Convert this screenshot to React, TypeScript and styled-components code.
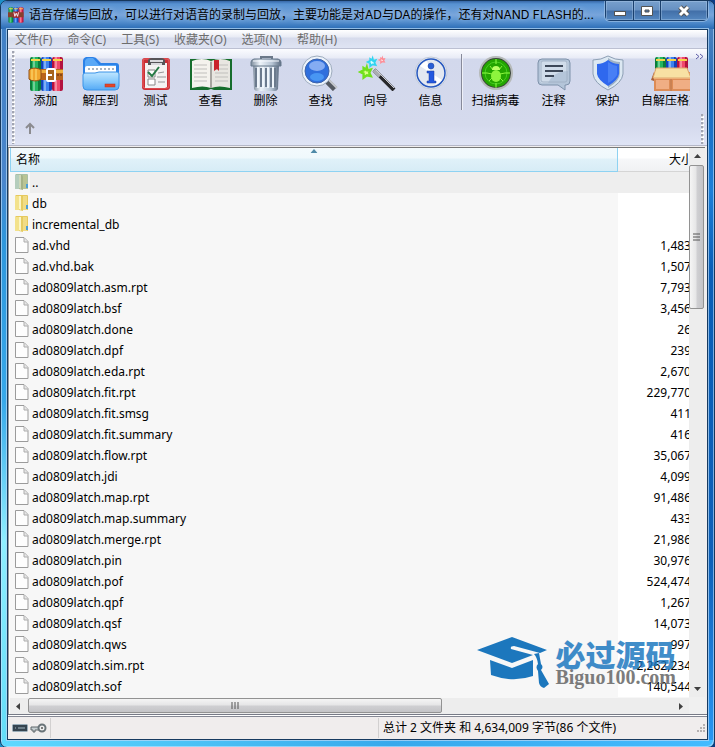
import React from "react";
import styled, { createGlobalStyle, css } from "styled-components";

const Global = createGlobalStyle`
  * { box-sizing: border-box; }
  body {
    margin: 0;
    font-family: "Noto Sans", "Noto Sans CJK SC", sans-serif;
    font-size: 12px;
    color: #000;
  }
  button { font: inherit; color: inherit; border: 0; padding: 0; background: none; }
`;

const Desktop = styled.div`
  min-height: 100vh;
  background: linear-gradient(90deg, #1c8ec8, #0a3c86);
`;

const Frame = styled.div`
  min-height: 100vh;
  display: flex;
  flex-direction: column;
  padding: 0 6px 7px;
  overflow: hidden;
  border: 1px solid #16375c;
  border-radius: 7px;
  background:
    linear-gradient(90deg, #5ed9ff, #37a9ec 55%, #43bbff) bottom / 100% 7px no-repeat,
    linear-gradient(180deg, #3f7fc4 0, #4a86cc 180px, #2f97dc 240px, #38a9ea 400px, #8eeeff 540px, #62dcf8) left / 50% 100% no-repeat,
    linear-gradient(180deg, #3a73b5 0, #4a80bd 30px, #1a6cc0 100px, #1d7fd8 190px, #0a5eb6 270px, #0e60b8 560px, #2a98f4) right / 50% 100% no-repeat;
  box-shadow: inset 1px 1px 0 rgba(200, 228, 255, 0.6), inset -1px -1px 0 rgba(200, 228, 255, 0.6);
`;

const TitleBar = styled.header`
  height: 28px;
  display: flex;
  align-items: flex-start;
  margin: 0 -6px;
  padding: 0 6px 0 7px;
  background: linear-gradient(180deg, #3768a8 0, #5792d2 3px, #78a5db 14px, #5791d0 20px, #2f70b8 27px);
`;

const TitleIcon = styled.svg`
  flex: none;
  width: 16px;
  height: 16px;
  margin-top: 6px;
`;

const Title = styled.h1`
  flex: 1;
  min-width: 0;
  margin: 5px 0 0 5px;
  overflow: hidden;
  white-space: nowrap;
  font-family: Inter, "Noto Sans CJK SC", sans-serif;
  font-size: 12px;
  font-weight: 400;
  line-height: 18px;
  text-shadow: 0 0 6px rgba(255, 255, 255, 0.45);
`;

const WindowButtons = styled.div`
  display: flex;
  flex: none;
  height: 20px;
  border: 1px solid #1a406e;
  border-top: 0;
  border-radius: 0 0 5px 5px;
  box-shadow: 0 0 0 1px rgba(190, 215, 240, 0.45);
`;

const WindowButton = styled.button<{ $wide?: boolean }>`
  width: ${(p) => (p.$wide ? 47 : 27)}px;
  display: flex;
  align-items: center;
  justify-content: center;
  background: linear-gradient(180deg, #78a0cd 0, #6690c2 9px, #426fa8 10px, #5487c0 100%);
  box-shadow: inset 0 0 0 1px rgba(190, 215, 240, 0.35);
  & + & { border-left: 1px solid #1a406e; }
`;

const Client = styled.div`
  flex: 1;
  display: flex;
  flex-direction: column;
  border: 1px solid #163a60;
  background: #f0eeee;
  box-shadow: 0 0 0 1px rgba(180, 215, 245, 0.75);
`;

const MenuBar = styled.nav`
  height: 19px;
  display: flex;
  gap: 15px;
  padding-left: 7px;
  background: linear-gradient(180deg, #fff 0, #e8ebf5 7px, #d6dbec 8px, #dfe4f3 100%);
  border-bottom: 1px solid #bcc0d2;
  color: #6d6d6d;
`;

const MenuItem = styled.button`
  line-height: 20px;
  white-space: nowrap;
`;

const ToolArea = styled.section`
  height: 97px;
  display: flex;
  padding: 2px 3px 0 4px;
  border-bottom: 1px solid #b5b8c8;
  background: linear-gradient(180deg, #fbfcff 0, #e8ebf6 9px, #d2d8ec 10px, #d5daed 76px, #dfe4f5 100%);
`;

const dots = css`
  width: 3px;
  background: radial-gradient(circle at 1px 1px, #a0a4b2 1px, #fff 2px) 0 0 / 3px 4px;
`;

const Gripper = styled.div`
  ${dots}
  flex: none;
  margin: 0 3px 1px 0;
`;

const ToolRows = styled.div`
  flex: 1;
  min-width: 0;
`;

const ToolRow = styled.div`
  display: flex;
  height: 64px;
  overflow: hidden;
`;

const ToolButton = styled.button<{ $width?: number }>`
  flex: none;
  width: ${(p) => p.$width ?? 55}px;
  display: flex;
  flex-direction: column;
  align-items: center;
  padding-top: 4px;
  line-height: 20px;
  white-space: nowrap;
`;

const ToolIcon = styled.svg`
  width: 44px;
  height: 36px;
  flex: none;
`;

const ToolDivider = styled.div`
  flex: none;
  width: 2px;
  height: 56px;
  margin: 3px 0 0 3px;
  background: #878a9a;
  border-right: 1px solid #eef0f8;
`;

const UpButton = styled.button`
  display: flex;
  margin: 7px 0 0 6px;
`;

const ToolEnd = styled.div`
  flex: none;
  width: 14px;
  display: flex;
  flex-direction: column;
  align-items: flex-end;
  justify-content: space-between;
  padding: 2px 0 1px;
`;

const EndGrip = styled.div`
  ${dots}
  height: 30px;
`;

const ListPane = styled.main`
  position: relative;
  flex: 1;
  display: grid;
  grid-template-columns: minmax(0, 1fr) 16px;
  grid-template-rows: 1fr 17px;
  margin: 1px 2px 0 0;
  padding-left: 1px;
  border-top: 1px solid #777;
  border-left: 1px solid #999;
  background: #fff;
`;

const Viewport = styled.div`
  overflow: hidden;
`;

const FileTable = styled.table`
  width: calc(100% + 10px);
  table-layout: fixed;
  border-collapse: separate;
  border-spacing: 0;
`;

const NameCol = styled.col``;
const SizeCol = styled.col`
  width: 81px;
`;

const HeadCell = styled.th<{ $sorted?: boolean }>`
  position: relative;
  height: 24px;
  padding: 0 5px;
  font-weight: 400;
  line-height: 22px;
  text-align: ${(p) => (p.$sorted ? "left" : "right")};
  background: ${(p) =>
    p.$sorted
      ? "linear-gradient(180deg, #f3fafd 0, #eff8fc 10px, #e0f1f9 11px, #d7ecf6 100%)"
      : "linear-gradient(180deg, #fff 0, #fff 10px, #f6f7f9 11px, #f0f1f3 100%)"};
  border-bottom: 1px solid ${(p) => (p.$sorted ? "#8ed2f2" : "#d5d5d5")};
  border-right: 1px solid ${(p) => (p.$sorted ? "#8ed2f2" : "#d5d5d5")};
  border-left: ${(p) => (p.$sorted ? "1px solid #8ed2f2" : "0")};
`;

const SortMark = styled.svg`
  position: absolute;
  top: 1px;
  left: 50%;
  transform: translateX(-50%);
`;

const Row = styled.tr<{ $current?: boolean }>`
  height: 21px;
  background: ${(p) => (p.$current ? "#eee" : "#fff")};
`;

const NameCell = styled.td<{ $current?: boolean }>`
  padding: 0;
  background: ${(p) => (p.$current ? "#eee" : "#f7f7f7")};
`;

const NameContent = styled.div`
  height: 21px;
  display: flex;
  align-items: center;
  line-height: 20px;
  font-size: 12px;
  white-space: nowrap;
`;

const IconSlot = styled.span`
  width: 20px;
  height: 21px;
  margin-right: 2px;
  padding: 2px 0 0 5px;
  background: #f7f7f7;
`;

const SizeCell = styled.td`
  padding: 0 8px 0 0;
  text-align: right;
  line-height: 20px;
`;

const VScroll = styled.div`
  display: flex;
  flex-direction: column;
  background: #ededed;
`;

const HScroll = styled.div`
  display: flex;
  background: #ededed;
  border-top: 1px solid #f7f7f7;
`;

const Corner = styled.div`
  background: #f0f0f0;
`;

const ArrowButton = styled.button`
  flex: none;
  width: 17px;
  height: 17px;
  display: flex;
  align-items: center;
  justify-content: center;
`;

const thumb = css`
  display: flex;
  align-items: center;
  justify-content: center;
  border: 1px solid #929292;
  border-radius: 2px;
`;

const VThumb = styled.div`
  ${thumb}
  height: 144px;
  margin-right: 1px;
  background: linear-gradient(90deg, #f5f5f5, #e6e6e7 45%, #cfcfd2 55%, #c4c4c7);
`;

const HThumb = styled.div`
  ${thumb}
  width: 61%;
  height: 15px;
  margin-left: 1px;
  background: linear-gradient(180deg, #f5f5f5, #e6e6e7 45%, #cfcfd2 55%, #c4c4c7);
`;

const Spacer = styled.div`
  flex: 1;
`;

const StatusBar = styled.footer`
  height: 25px;
  display: flex;
  padding: 3px 1px 1px 3px;
  border-top: 1px solid #777a86;
  background: linear-gradient(180deg, #fff 0, #fff 1px, #858894 1px, #858894 2px, #f0eded 2px);
`;

const StatusCell = styled.div<{ $icons?: boolean }>`
  flex: ${(p) => (p.$icons ? "0 0 39px" : "1 1 0")};
  display: flex;
  align-items: center;
  gap: 2px;
  padding-left: ${(p) => (p.$icons ? 1 : 4)}px;
  line-height: 18px;
  white-space: nowrap;
  border-left: ${(p) => (p.$icons ? "0" : "1px solid #d2d0d0")};
`;

const Watermark = styled.div`
  position: absolute;
  right: 29px;
  bottom: 26px;
  display: flex;
  align-items: center;
  gap: 6px;
  opacity: 0.9;
  pointer-events: none;
`;

const WatermarkText = styled.div`
  display: flex;
  flex-direction: column;
`;

const WatermarkName = styled.span`
  font: 900 30px/28px "Noto Sans CJK SC", sans-serif;
  color: #1674be;
  opacity: 0.9;
`;

const WatermarkSite = styled.span`
  font: 700 20px/20px "Liberation Serif", serif;
  color: #6e6e6e;
`;

const Books = () => (
  <g>
    {[
      ["#0b7d3b", "#23b45f", 6],
      ["#1741b8", "#3c82ee", 17],
      ["#b3123f", "#f0486b", 28],
    ].map(([dark, light, x]) => (
      <g key={x as number} transform={`translate(${x} 2)`}>
        <rect width="11" height="34" rx="2" fill={dark as string} />
        <rect x="2" width="6" height="34" fill={light as string} />
        <rect x="3" width="2" height="34" fill="#fff" opacity=".35" />
        <rect x="1" y="2" width="9" height="2" fill="#f7d54a" />
      </g>
    ))}
  </g>
);

const AddIcon = () => (
  <ToolIcon viewBox="0 0 44 36">
    <Books />
    <path d="M5 14h34v11H5z" fill="#b9651b" />
    <path d="M5 15h34v3H5z" fill="#eeb03f" />
    <path d="M5 15c4-3 9-2 12 0v9c-4 3-9 2-12 0z" fill="#f0a52f" stroke="#91501a" />
    <path d="M8 14v11M12 14v11" stroke="#ffe27c" />
    <rect x="23" y="14" width="8" height="12" rx="1" fill="#a6651c" stroke="#fff" strokeWidth="2" />
    <path d="M22 20h6" stroke="#fff" strokeWidth="2" />
    <path d="M34 19v2M37 19v2" stroke="#592f0e" />
  </ToolIcon>
);

const ExtractIcon = () => (
  <ToolIcon viewBox="0 0 44 36">
    <defs>
      <linearGradient id="fold" x1="0" y1="0" x2="0" y2="1">
        <stop stopColor="#c0e6ff" />
        <stop offset=".5" stopColor="#8acbfc" />
        <stop offset="1" stopColor="#55aaf5" />
      </linearGradient>
    </defs>
    <path d="M4 6q0-3 3-4h7q3 0 5 3l3 3h15q3 0 3 3v20H4z" fill="#2c82e8" />
    <path d="M6 6q1-3 4-3h4l6 7h17v3H6z" fill="#59a8f6" />
    <path d="M6 13q0-2 2-2h29v10H6z" fill="#fff" />
    <path d="M9 14h27" stroke="#a9b4c0" strokeDasharray="2 2" strokeWidth="2" />
    <path d="M4 20q0-2 2-2h10l4-1h18q2 0 2 2v12q0 4-4 4H8q-4 0-4-4z" fill="url(#fold)" stroke="#3b93e8" />
    <rect x="26" y="29" width="10" height="3" fill="#e34527" stroke="#b93325" strokeWidth=".5" />
  </ToolIcon>
);

const TestIcon = () => (
  <ToolIcon viewBox="0 0 44 36">
    <rect x="8" y="3" width="28" height="32" rx="3" fill="#c92f36" />
    <rect x="9" y="4" width="26" height="29" rx="2" fill="none" stroke="#ed6264" />
    <path d="M11 8h22v24l-2 1H11z" fill="#f4f2f2" />
    <path d="M14 6q0-3 4-3h9q4 0 4 3v4H14z" fill="#565458" />
    <path d="M16 6h13M17 9h11" stroke="#d9d9dd" strokeWidth="2" />
    <path d="M14 15h7v7h-7zM14 24h7v6h-7z" fill="#fff" stroke="#888" />
    <path d="M14 17l4 4 7-9" fill="none" stroke="#267a45" strokeWidth="2" />
    <path d="M24 18l6-1M23 22h9M24 27h7" stroke="#96979a" />
  </ToolIcon>
);

const ViewIcon = () => (
  <ToolIcon viewBox="0 0 44 36">
    <path d="M1 4h42v31H25l-3-1-3 1H1z" fill="#166d2c" />
    <path d="M3 6q10-4 19 0v27q-8-3-19 0z" fill="#f4f2ed" />
    <path d="M22 6q9-4 19 0v27q-11-3-19 0z" fill="#e8e6e1" />
    <path d="M21 6q1 2 2 0v27h-2z" fill="#a6a49f" />
    {[10, 14, 18, 22, 26].map((y) => (
      <path key={y} d={`M5 ${y}h13M26 ${y}h13`} stroke="#c0bfbc" />
    ))}
    <path d="M25 5h5v11l-2-2-3 2z" fill="#c9222c" />
  </ToolIcon>
);

const DeleteIcon = () => (
  <ToolIcon viewBox="0 0 44 36">
    <defs>
      <linearGradient id="metal">
        <stop stopColor="#7d8c9c" />
        <stop offset=".3" stopColor="#edf3f9" />
        <stop offset=".7" stopColor="#b7c5d5" />
        <stop offset="1" stopColor="#5d6d82" />
      </linearGradient>
    </defs>
    <path d="M17 5V2h11v3" fill="none" stroke="#6b7889" strokeWidth="2" />
    <path d="M9 9h26l-1 25q-1 2-3 2H13q-2 0-3-2z" fill="url(#metal)" />
    {[12, 17, 22, 27, 31].map((x) => (
      <path key={x} d={`M${x} 13v19`} stroke="#6b7a8d" strokeWidth="2" />
    ))}
    {[14, 19, 24, 29].map((x) => (
      <path key={x} d={`M${x} 12v21`} stroke="#eff5fb" strokeWidth="2" />
    ))}
    <path d="M7 7q0-2 3-3h24q3 1 3 3v4H7z" fill="url(#metal)" stroke="#697a8d" />
    <path d="M9 6h26" stroke="#f7faff" />
  </ToolIcon>
);

const FindIcon = () => (
  <ToolIcon viewBox="0 0 44 36">
    <path d="M28 26l8 8" stroke="#555a62" strokeWidth="6" />
    <path d="M30 25l8 8" stroke="#c6c9ce" strokeWidth="2" />
    <circle cx="18" cy="16" r="15" fill="#edf3fb" stroke="#9eacbd" />
    <circle cx="18" cy="16" r="12" fill="#2f6fdd" stroke="#3e63a8" />
    <ellipse cx="18" cy="22" rx="7" ry="4" fill="#53a7fc" opacity=".7" />
    <ellipse cx="18" cy="11" rx="8" ry="5" fill="#b2cdff" opacity=".65" />
  </ToolIcon>
);

const star = "M1-6L2-2 6-3 4 1 6 5 1 4-3 7-3 2-7 0-3-2-3-5 0-3z";

const WizardIcon = () => (
  <ToolIcon viewBox="0 0 44 36">
    <path d="M20 15l20 20" stroke="#292a2d" strokeWidth="4" />
    <path d="M20 15l6 6" stroke="#aaadb1" strokeWidth="4" />
    <path d="M22 15l18 18" stroke="#cfd0d3" strokeWidth="1" />
    <path d={star} transform="translate(12 17) scale(.8)" fill="#dcff84" stroke="#71e01d" strokeWidth="3" />
    <path d={star} transform="translate(18 7) scale(.6)" fill="#d7fcff" stroke="#30d5f1" strokeWidth="3" />
    <path d={star} transform="translate(28 5) scale(.4)" fill="#ffdadd" stroke="#ff8b94" strokeWidth="3" />
  </ToolIcon>
);

const InfoIcon = () => (
  <ToolIcon viewBox="0 0 44 36">
    <circle cx="22" cy="18" r="16" fill="#edf1f7" stroke="#c0c8d6" />
    <circle cx="22" cy="18" r="14" fill="#e3e8f1" stroke="#2657be" strokeWidth="1.500" />
    <path d="M22 18L11 11a14 14 0 0 1 7-5zM22 18l11 7a14 14 0 0 1-7 5z" fill="#fff" />
    <circle cx="22" cy="11" r="3" fill="#285fd5" stroke="#1c3f9a" strokeWidth=".5" />
    <path d="M18 16h7v10h2v2h-9v-2h2v-8h-2z" fill="#2358e0" stroke="#1c3f9a" strokeWidth=".5" />
  </ToolIcon>
);

const VirusIcon = () => (
  <ToolIcon viewBox="0 0 44 36">
    <circle cx="22" cy="18" r="16" fill="#394439" stroke="#b6bab9" strokeWidth="2" />
    <circle cx="22" cy="18" r="14" fill="#23a500" />
    <circle cx="22" cy="18" r="11" fill="none" stroke="#48cc22" />
    <path d="M22 4v5M22 28v5M8 18h5M31 18h5" stroke="#91ff45" />
    <path d="M16 11l3 4M28 11l-3 4M13 18l5 1M31 18l-5 1M15 26l3-3M29 26l-3-3" stroke="#8df43d" />
    <ellipse cx="22" cy="21" rx="5" ry="6" fill="#8df43d" />
    <path d="M18 15q0-4 4-4t4 4z" fill="#baff65" />
  </ToolIcon>
);

const CommentIcon = () => (
  <ToolIcon viewBox="0 0 44 36">
    <path d="M10 4h24q4 0 4 4v18q0 4-4 4h-1v5l-7-5H10q-4 0-4-4V8q0-4 4-4z" fill="#b4c5d9" stroke="#7f92aa" />
    <path d="M11 6h22q3 0 3 3v7q-14 0-20 12h-5q-3 0-3-3V9q0-3 3-3z" fill="#d0dcea" />
    <rect x="9" y="6" width="26" height="21" rx="2" fill="none" stroke="#a2b2c6" />
    <path d="M13 11h18M13 16h18M13 21h9" stroke="#3d4859" strokeWidth="2" />
  </ToolIcon>
);

const ProtectIcon = () => (
  <ToolIcon viewBox="0 0 44 36">
    <path d="M22 1q7 4 15 4v14q-1 9-15 16Q8 28 7 19V5q8 0 15-4z" fill="#dce8f2" stroke="#8d9fb4" />
    <path d="M22 3q6 4 12 4v11q0 8-12 15z" fill="#9fb2c6" />
    <path d="M22 5q5 4 11 4v10q-1 6-11 12-10-6-11-12V9q6 0 11-4z" fill="#2f68ee" />
    <path d="M22 7q4 3 9 4v9q-3 5-9 8z" fill="#487ff5" />
  </ToolIcon>
);

const SfxIcon = () => (
  <ToolIcon viewBox="0 0 44 36">
    <Books />
    <path d="M5 17h37v19H5z" fill="#dd8c56" />
    <path d="M5 17L2 25l3 1z" fill="#a8613b" />
    <path d="M7 13h31l4 10H4z" fill="#f8e1a3" stroke="#dfa66c" />
    <path d="M5 23h37v1H5z" fill="#eeb078" />
    <path d="M7 25h13v9H7zM24 25h17v9H24z" fill="#f0ae84" />
    <path d="M22 24v12" stroke="#b8764c" />
  </ToolIcon>
);

const FolderIcon = ({ parent }: { parent?: boolean }) => (
  <svg width="14" height="17" viewBox="0 0 14 17" aria-hidden>
    <path d="M1 0h11q1 0 1 1v14H0V1z" fill={parent ? "#a9bfa6" : "#e6c95e"} />
    <path d="M0 1h4v14H0z" fill={parent ? "#b4cdbc" : "#f3e28c"} />
    <path d="M4 1h3l1 2v13l-4-1z" fill={parent ? "#a5b288" : "#e6cc62"} />
    <path d="M4 1h2v14l-2-1z" fill={parent ? "#cdd8ba" : "#fbf5c6"} />
    <path d="M8 1h4v14H8z" fill={parent ? "#b9c494" : "#f0dc85"} />
    <path d="M12 10v4" stroke="#4d9ed4" strokeWidth="2" />
  </svg>
);

const FileIcon = () => (
  <svg width="14" height="17" viewBox="0 0 14 17" aria-hidden>
    <path d="M1 .5h8l4 4v11H.5V.5z" fill="#fdfdfd" stroke="#9b9b9b" />
    <path d="M9 1v4h4" fill="#e7e7e7" stroke="#acacac" />
  </svg>
);

const CapIcon = () => (
  <svg width="72" height="51" viewBox="0 0 72 51" aria-hidden>
    <path d="M0 13L35 0l35 13-7 3-26-7q-4 0-3 3l22 6-21 8z" fill="#056ab7" />
    <path d="M13 23l22 8 21-8v16q-20 7-42-1z" fill="#056ab7" />
    <path d="M57 17l5-1 2 11q3 3 0 6l8 14-5 4q-4-1-5-5l-1-12q-3-4 0-7-1-7-4-10z" fill="#056ab7" />
  </svg>
);

const Arrow = ({ d }: { d: string }) => (
  <svg width="7" height="7" viewBox="0 0 7 7" aria-hidden>
    <path d={d} fill="#404040" />
  </svg>
);

const tools = [
  { label: "添加", Icon: AddIcon },
  { label: "解压到", Icon: ExtractIcon },
  { label: "测试", Icon: TestIcon },
  { label: "查看", Icon: ViewIcon },
  { label: "删除", Icon: DeleteIcon },
  { label: "查找", Icon: FindIcon },
  { label: "向导", Icon: WizardIcon },
  { label: "信息", Icon: InfoIcon },
];

const extraTools = [
  { label: "扫描病毒", Icon: VirusIcon, width: 65 },
  { label: "注释", Icon: CommentIcon, width: 51 },
  { label: "保护", Icon: ProtectIcon, width: 57 },
  { label: "自解压格式", Icon: SfxIcon, width: 70 },
];

const menus = ["文件(F)", "命令(C)", "工具(S)", "收藏夹(O)", "选项(N)", "帮助(H)"];

type Entry = { name: string; size?: string; kind?: "parent" | "folder" };

const entries: Entry[] = [
  { name: "..", kind: "parent" },
  { name: "db", kind: "folder" },
  { name: "incremental_db", kind: "folder" },
  { name: "ad.vhd", size: "1,483" },
  { name: "ad.vhd.bak", size: "1,507" },
  { name: "ad0809latch.asm.rpt", size: "7,793" },
  { name: "ad0809latch.bsf", size: "3,456" },
  { name: "ad0809latch.done", size: "26" },
  { name: "ad0809latch.dpf", size: "239" },
  { name: "ad0809latch.eda.rpt", size: "2,670" },
  { name: "ad0809latch.fit.rpt", size: "229,770" },
  { name: "ad0809latch.fit.smsg", size: "411" },
  { name: "ad0809latch.fit.summary", size: "416" },
  { name: "ad0809latch.flow.rpt", size: "35,067" },
  { name: "ad0809latch.jdi", size: "4,099" },
  { name: "ad0809latch.map.rpt", size: "91,486" },
  { name: "ad0809latch.map.summary", size: "433" },
  { name: "ad0809latch.merge.rpt", size: "21,986" },
  { name: "ad0809latch.pin", size: "30,976" },
  { name: "ad0809latch.pof", size: "524,474" },
  { name: "ad0809latch.qpf", size: "1,267" },
  { name: "ad0809latch.qsf", size: "14,073" },
  { name: "ad0809latch.qws", size: "997" },
  { name: "ad0809latch.sim.rpt", size: "2,262,234" },
  { name: "ad0809latch.sof", size: "140,544" },
];

export default function App() {
  return (
    <Desktop>
      <Global />
      <Frame>
        <TitleBar>
          <TitleIcon viewBox="5 1 35 36" preserveAspectRatio="none">
            <Books />
            <path d="M5 13h34v11H5z" fill="#86402d" />
            <path d="M16 11h13v14H16z" fill="#a32a2f" />
            <path d="M18 13l2 9 3-7 3 7 2-9" stroke="#fff" strokeWidth="2" fill="none" />
          </TitleIcon>
          <Title>
            语音存储与回放，可以进行对语音的录制与回放，主要功能是对AD与DA的操作，还有对NAND FLASH的...
          </Title>
          <WindowButtons>
            <WindowButton aria-label="最小化">
              <svg width="14" height="12" viewBox="0 0 14 12">
                <rect x="1.5" y="6.5" width="11" height="4" fill="#fff" stroke="#545454" />
              </svg>
            </WindowButton>
            <WindowButton aria-label="最大化">
              <svg width="12" height="12" viewBox="0 0 12 12">
                <path d="M.5 1.5h11v9H.5zM4 5v2h4V5z" fill="#fff" stroke="#545454" fillRule="evenodd" />
              </svg>
            </WindowButton>
            <WindowButton $wide aria-label="关闭">
              <svg width="14" height="12" viewBox="0 0 14 12">
                <path d="M3 2l8 8M11 2l-8 8" stroke="#545454" strokeWidth="5" />
                <path d="M3 2l8 8M11 2l-8 8" stroke="#fff" strokeWidth="3" />
              </svg>
            </WindowButton>
          </WindowButtons>
        </TitleBar>
        <Client>
          <MenuBar>
            {menus.map((m) => (
              <MenuItem key={m}>{m}</MenuItem>
            ))}
          </MenuBar>
          <ToolArea>
            <Gripper />
            <ToolRows>
              <ToolRow>
                {tools.map(({ label, Icon }) => (
                  <ToolButton key={label}>
                    <Icon />
                    {label}
                  </ToolButton>
                ))}
                <ToolDivider />
                {extraTools.map(({ label, Icon, width }) => (
                  <ToolButton key={label} $width={width}>
                    <Icon />
                    {label}
                  </ToolButton>
                ))}
              </ToolRow>
              <UpButton aria-label="向上">
                <svg width="12" height="12" viewBox="0 0 12 12">
                  <path d="M6 12V2M2 6l4-4 4 4" fill="none" stroke="#8b8b8f" strokeWidth="2" />
                </svg>
              </UpButton>
            </ToolRows>
            <ToolEnd>
              <svg width="9" height="7" viewBox="0 0 9 7">
                <path d="M1 1l3 2.500-3 2.500M5 1l3 2.500-3 2.500" fill="none" stroke="#5b5ba6" />
              </svg>
              <EndGrip />
            </ToolEnd>
          </ToolArea>
          <ListPane>
            <Viewport>
              <FileTable>
                <colgroup>
                  <NameCol />
                  <SizeCol />
                </colgroup>
                <thead>
                  <tr>
                    <HeadCell $sorted>
                      名称
                      <SortMark width="7" height="4" viewBox="0 0 7 4">
                        <path d="M0 4l3.500-4L7 4z" fill="#4f8aa8" />
                      </SortMark>
                    </HeadCell>
                    <HeadCell>大小</HeadCell>
                  </tr>
                </thead>
                <tbody>
                  {entries.map((e) => (
                    <Row key={e.name} $current={e.kind === "parent"}>
                      <NameCell $current={e.kind === "parent"}>
                        <NameContent>
                          <IconSlot>
                            {e.kind ? <FolderIcon parent={e.kind === "parent"} /> : <FileIcon />}
                          </IconSlot>
                          {e.name}
                        </NameContent>
                      </NameCell>
                      <SizeCell>{e.size}</SizeCell>
                    </Row>
                  ))}
                </tbody>
              </FileTable>
            </Viewport>
            <VScroll>
              <ArrowButton aria-label="向上滚动">
                <Arrow d="M0 5l3.500-4L7 5z" />
              </ArrowButton>
              <VThumb>
                <svg width="7" height="8" viewBox="0 0 7 8">
                  <path d="M0 1h7M0 4h7M0 7h7" stroke="#555" />
                </svg>
              </VThumb>
              <Spacer />
              <ArrowButton aria-label="向下滚动">
                <Arrow d="M0 2l3.500 4L7 2z" />
              </ArrowButton>
            </VScroll>
            <HScroll>
              <ArrowButton aria-label="向左滚动">
                <Arrow d="M5 0L1 3.500 5 7z" />
              </ArrowButton>
              <HThumb>
                <svg width="8" height="7" viewBox="0 0 8 7">
                  <path d="M1 0v7M4 0v7M7 0v7" stroke="#555" />
                </svg>
              </HThumb>
              <Spacer />
              <ArrowButton aria-label="向右滚动">
                <Arrow d="M2 0l4 3.500L2 7z" />
              </ArrowButton>
            </HScroll>
            <Corner />
            <Watermark>
              <CapIcon />
              <WatermarkText>
                <WatermarkName>必过源码</WatermarkName>
                <WatermarkSite>Biguo100.com</WatermarkSite>
              </WatermarkText>
            </Watermark>
          </ListPane>
          <StatusBar>
            <StatusCell $icons>
              <svg width="16" height="10" viewBox="0 0 16 10">
                <rect x=".5" y="1.500" width="15" height="7" rx="1" fill="#354450" stroke="#99adba" />
                <path d="M3 5h1M6 5h7" stroke="#a6b8c2" />
              </svg>
              <svg width="17" height="12" viewBox="0 0 17 12">
                <path d="M1 5h8v3H5v2H3V8H1z" fill="#c5cdd0" stroke="#5e676b" />
                <circle cx="12" cy="6" r="3.500" fill="#eee" stroke="#697378" strokeWidth="2" />
                <circle cx="12" cy="6" r="1" fill="#555" />
              </svg>
            </StatusCell>
            <StatusCell />
            <StatusCell>
              总计 2 文件夹 和 4,634,009 字节(86 个文件)
              <Spacer />
              <svg width="10" height="12" viewBox="0 0 10 12">
                <path d="M7 3h2M4 6h2M7 6h2M1 9h2M4 9h2M7 9h2" stroke="#b5b1b1" strokeWidth="2" />
              </svg>
            </StatusCell>
          </StatusBar>
        </Client>
      </Frame>
    </Desktop>
  );
}
